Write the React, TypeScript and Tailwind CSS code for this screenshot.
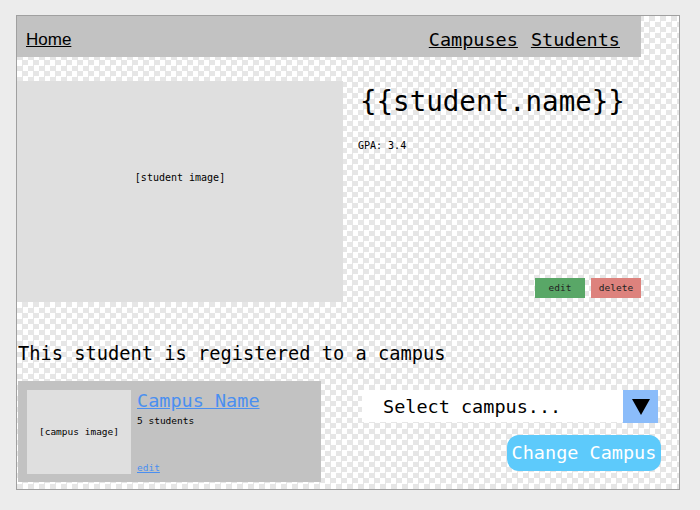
// Student detail wireframe — single page, checkerboard canvas inside a framed viewport.

const mono = { fontFamily: '"DejaVu Sans Mono", "Liberation Mono", monospace' };

function NavBar() {
  return (
    <nav className="flex h-[41px] w-[624px] items-center justify-between bg-[#c2c2c2] pl-[9px] pr-[21px] pt-[6px]">
      <a href="#" className="font-['Liberation_Sans',Arial,sans-serif] text-[17px] text-black underline">
        Home
      </a>
      <div className="flex gap-[13px] text-[18.5px] text-black" style={mono}>
        <a href="#" className="underline">Campuses</a>
        <a href="#" className="underline">Students</a>
      </div>
    </nav>
  );
}

function StudentPanel() {
  return (
    <div className="mt-[24px] flex">
      {/* image placeholder */}
      <div className="flex h-[221px] w-[326px] items-center justify-center bg-[#dfdfdf] pb-[28px] text-[10px] text-black">
        [student image]
      </div>

      {/* details */}
      <div className="flex h-[221px] w-[298px] flex-col">
        <h1 className="mt-[4px] pl-[17px] text-[27.5px] leading-[33px] text-black">{'{{student.name}}'}</h1>
        <p className="mt-[22px] pl-[15px] text-[10px] leading-[12px] text-black">GPA: 3.4</p>
        <div className="mb-[4px] mt-auto flex justify-end gap-[6px]">
          <button className="h-[20px] w-[50px] bg-[#59a767] text-[9.5px] text-[#222]">edit</button>
          <button className="h-[20px] w-[50px] bg-[#dd827d] text-[9.5px] text-[#222]">delete</button>
        </div>
      </div>
    </div>
  );
}

function CampusCard() {
  return (
    <div className="ml-[1px] flex h-[101px] w-[303px] bg-[#c2c2c2] p-[9px] pb-[8px]">
      <div className="flex h-[84px] w-[104px] items-center justify-center bg-[#dfdfdf] text-[9.5px] text-black">
        [campus image]
      </div>
      <div className="ml-[6px] flex flex-col">
        <a href="#" className="text-[18.5px] leading-[22px] text-[#4a8ff0] underline">
          Campus Name
        </a>
        <span className="mt-[3px] text-[9.5px] leading-[12px] text-black">5 students</span>
        <a href="#" className="mt-auto text-[9.5px] leading-[12px] text-[#4a8ff0] underline">
          edit
        </a>
      </div>
    </div>
  );
}

function CampusPicker() {
  return (
    <div className="ml-[41px] flex w-[299px] flex-col items-end pt-[9px]">
      <div className="flex self-start">
        <div className="flex h-[32px] w-[261px] items-center bg-white pl-[21px] pt-[2px] text-[18.5px] text-black">
          Select campus...
        </div>
        <div className="flex h-[33px] w-[35px] items-center justify-center bg-[#8bbcfa]">
          <svg width="18" height="16" viewBox="0 0 18 16">
            <polygon points="0,0 18,0 9,16" fill="#000" />
          </svg>
        </div>
      </div>
      <button className="mt-[12px] h-[36px] w-[154px] rounded-[12px] bg-[#5dcafb] text-[18.5px] text-white">
        Change Campus
      </button>
    </div>
  );
}

export default function App() {
  return (
    <div className="h-[510px] w-[700px] bg-[#ececec] pl-[16px] pt-[15px]" style={mono}>
      <div className="h-[475px] w-[664px] border border-[#a0a0a0] bg-[conic-gradient(#e6e6e6_25%,#fff_0_50%,#e6e6e6_0_75%,#fff_0)] bg-[length:11px_11px]">
        <NavBar />
        <StudentPanel />
        <p className="ml-[1px] mt-[41px] text-[18.7px] leading-[22px] text-black">
          This student is registered to a campus
        </p>
        <div className="mt-[16px] flex">
          <CampusCard />
          <CampusPicker />
        </div>
      </div>
    </div>
  );
}
